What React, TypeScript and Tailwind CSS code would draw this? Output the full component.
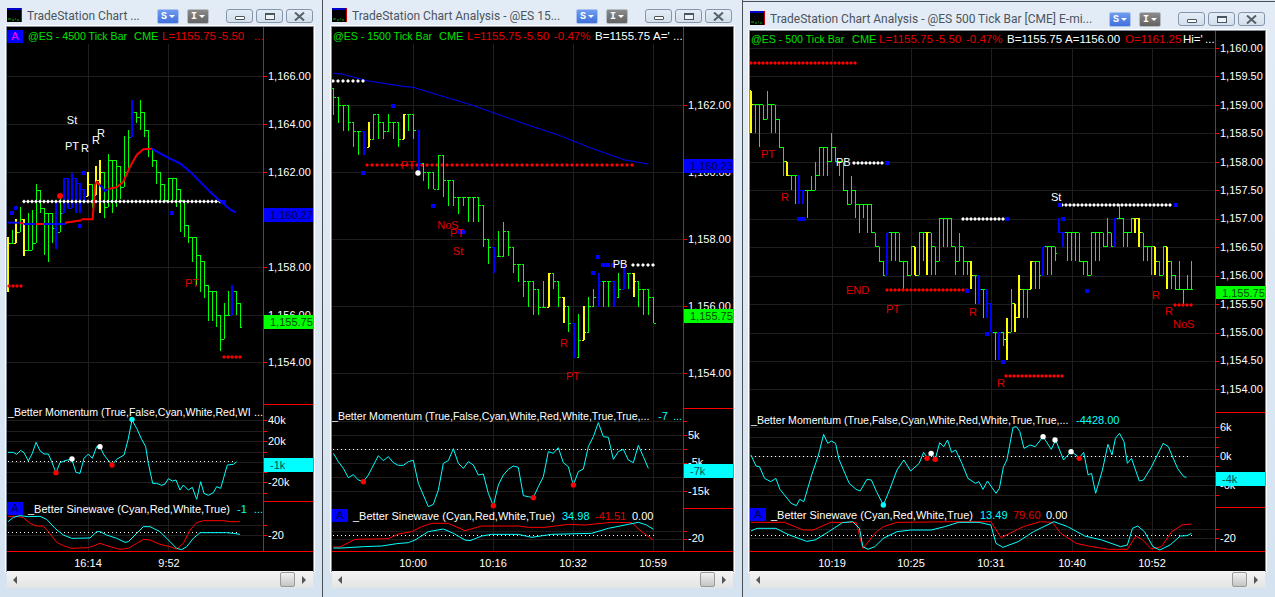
import { ReactNode } from "react";

type Bar = [number, number, string];
type Pt = [number, number];

const barColors: Record<string, string> = { g: "#00ff00", y: "#ffff00", b: "#0000ff" };
const FONT = "'Liberation Sans', Arial, sans-serif";
const RED = "#ff0000";
const DARK_RED = "#e00000";
const CYAN = "#00ffff";
const GREEN = "#00e000";
const GRID = "#1e1e1e";

// staircase ticks: the close sits on whatever the next bar touches
const closeOf = (bars: Bar[], i: number) => {
  const [top, bottom] = bars[i];
  const next = bars[i + 1];
  if (!next) return bottom;
  if (next[0] >= top && next[0] <= bottom) return next[0];
  if (next[1] >= top && next[1] <= bottom) return next[1];
  return (top + bottom) / 2;
};

const bars1: Bar[] = [
  [237, 292, "y"], [230, 243, "g"], [219, 243, "y"], [207, 232, "g"], [219, 256, "y"], [213, 250, "g"], [210, 250, "g"],
  [184, 243, "g"], [190, 213, "g"], [208, 255, "g"], [213, 262, "g"], [213, 243, "g"], [203, 249, "b"], [197, 232, "g"],
  [178, 213, "b"], [178, 208, "b"], [173, 208, "b"], [178, 213, "b"], [183, 213, "b"], [189, 203, "b"], [172, 196, "y"],
  [184, 208, "g"], [166, 195, "y"], [160, 213, "y"], [172, 218, "g"], [154, 207, "g"], [160, 213, "g"], [160, 207, "g"],
  [166, 199, "g"], [136, 187, "g"], [130, 172, "g"], [100, 137, "b"], [112, 123, "g"], [100, 130, "g"], [112, 137, "g"],
  [130, 157, "g"], [148, 167, "g"], [160, 184, "g"], [172, 200, "g"], [184, 200, "g"], [178, 200, "g"], [178, 200, "g"],
  [178, 207, "g"], [189, 232, "g"], [200, 237, "g"], [225, 243, "g"], [237, 262, "g"], [237, 285, "g"], [255, 292, "g"],
  [261, 298, "g"], [285, 321, "g"], [291, 321, "g"], [291, 327, "g"], [315, 351, "g"], [303, 339, "g"], [291, 315, "g"],
  [285, 315, "b"], [291, 315, "g"], [303, 327, "g"],
];

const bars2: Bar[] = [
  [88, 115, "g"], [97, 123, "g"], [105, 131, "g"], [105, 131, "g"], [122, 147, "g"], [131, 155, "g"], [131, 155, "b"],
  [122, 147, "y"], [114, 139, "g"], [114, 139, "g"], [122, 139, "g"], [114, 131, "g"], [122, 139, "g"], [122, 147, "g"],
  [114, 139, "y"], [114, 131, "g"], [114, 139, "g"], [130, 173, "b"], [163, 181, "g"], [172, 189, "g"], [172, 189, "g"],
  [155, 189, "g"], [155, 197, "g"], [180, 206, "g"], [180, 206, "g"], [197, 214, "g"], [197, 206, "g"], [197, 222, "g"],
  [197, 222, "g"], [197, 222, "g"], [205, 247, "g"], [239, 264, "g"], [247, 273, "b"], [231, 256, "g"], [222, 256, "g"],
  [231, 256, "g"], [247, 273, "g"], [264, 282, "g"], [264, 297, "g"], [281, 307, "g"], [281, 315, "g"], [289, 315, "g"],
  [281, 307, "g"], [273, 307, "y"], [273, 289, "g"], [281, 307, "g"], [297, 323, "y"], [306, 332, "g"], [323, 357, "b"],
  [314, 357, "g"], [306, 340, "y"], [297, 332, "g"], [289, 306, "g"], [273, 307, "b"], [281, 307, "g"], [281, 307, "g"],
  [281, 307, "b"], [273, 297, "g"], [265, 289, "b"], [273, 289, "g"], [273, 297, "y"], [281, 307, "g"], [289, 315, "g"],
  [289, 315, "g"], [297, 323, "g"],
];

// window 3 is drawn in quarter-point steps below 1,160.00
const stepY = (n: number) => 48 + 14.2 * n;
const steps3: Bar[] = [
  [3, 6, "y"], [4, 6, "g"], [4, 7, "g"], [4, 5, "g"], [3, 5, "g"], [4, 6, "g"], [4, 6, "g"], [5, 7, "g"], [7, 9, "g"],
  [8, 9, "y"], [9, 10, "g"], [9, 11, "g"], [9, 11, "b"], [10, 11, "b"], [10, 12, "g"], [9, 10, "g"], [8, 10, "g"],
  [7, 9, "g"], [7, 9, "g"], [7, 9, "g"], [6, 8, "g"], [7, 8, "g"], [8, 9, "g"], [8, 10, "g"], [10, 11, "g"], [9, 11, "g"],
  [10, 12, "g"], [11, 13, "g"], [11, 12, "g"], [11, 13, "g"], [11, 13, "g"], [13, 14, "g"], [14, 15, "g"], [15, 16, "g"],
  [13, 16, "b"], [13, 15, "g"], [13, 15, "g"], [13, 15, "g"], [15, 17, "g"], [15, 16, "g"], [14, 16, "g"], [14, 16, "y"],
  [13, 16, "g"], [13, 15, "g"], [13, 16, "y"], [13, 16, "g"], [14, 16, "g"], [12, 15, "g"], [12, 14, "g"], [12, 14, "g"],
  [12, 14, "g"], [14, 16, "g"], [13, 15, "g"], [14, 16, "g"], [15, 16, "g"], [15, 17, "y"], [16, 18, "g"], [16, 18, "b"],
  [17, 19, "g"], [17, 19, "b"], [18, 20, "b"], [20, 22, "g"], [20, 22, "b"], [20, 21, "g"], [19, 22, "y"], [17, 20, "g"],
  [18, 20, "y"], [16, 19, "y"], [17, 19, "g"], [17, 19, "g"], [15, 17, "y"], [15, 17, "g"], [15, 17, "g"], [14, 16, "b"],
  [14, 16, "g"], [14, 16, "g"], [14, 15, "g"], [12, 13, "b"], [13, 14, "b"], [13, 15, "g"], [13, 15, "g"], [13, 15, "g"],
  [13, 15, "g"], [15, 16, "g"], [15, 16, "g"], [13, 16, "g"], [13, 15, "g"], [13, 15, "g"], [13, 14, "g"], [12, 14, "g"],
  [13, 14, "g"], [12, 14, "b"], [11, 12, "g"], [12, 14, "g"], [13, 14, "g"], [12, 13, "g"], [12, 13, "y"], [12, 14, "y"],
  [13, 15, "g"], [14, 15, "g"], [14, 16, "g"], [14, 16, "y"], [15, 16, "g"], [14, 16, "g"], [14, 17, "y"], [15, 17, "g"],
  [16, 17, "g"], [15, 17, "g"], [17, 18, "g"], [16, 17, "g"], [15, 17, "g"],
];
const bars3: Bar[] = steps3.map(([a, b, c]) => [stepY(a), stepY(b), c]);

// traced lines, in crop units (x / 3 or / 2.93, y / 3)
const z1 = (p: Pt[], oy = 400): Pt[] => p.map(([x, y]) => [x / 3, oy + y / 3]);
const z2 = (p: Pt[], oy = 400): Pt[] => p.map(([x, y]) => [325 + x / 3, oy + y / 3]);
const z3 = (p: Pt[], oy = 400): Pt[] => p.map(([x, y]) => [740 + x / 2.93, oy + y / 3]);

const mom1 = z1([[24,157],[40,157],[50,163],[62,151],[72,158],[85,183],[97,160],[108,127],[120,152],[132,162],[145,162],[155,185],[168,218],[180,188],[195,182],[215,177],[228,217],[240,220],[252,175],[265,162],[277,175],[290,140],[300,140],[312,165],[336,195],[350,178],[372,165],[384,120],[396,60],[410,85],[425,118],[437,140],[445,190],[458,250],[470,250],[485,256],[495,252],[505,236],[517,243],[528,240],[540,270],[550,255],[565,270],[577,262],[590,298],[602,245],[612,280],[625,286],[640,278],[650,260],[662,265],[682,195],[700,193],[710,185]]);
const sineC1 = z1([[24,365],[40,352],[60,347],[85,350],[120,349],[140,358],[165,385],[190,405],[215,415],[270,414],[290,395],[300,395],[320,405],[350,415],[375,427],[385,425],[410,400],[430,380],[450,380],[480,395],[510,425],[530,445],[545,449],[560,440],[580,415],[600,398],[680,398],[700,400],[720,403]]);
const sineR1 = z1([[24,349],[50,349],[70,353],[90,370],[110,378],[130,378],[145,395],[170,427],[190,437],[215,445],[265,443],[280,438],[300,430],[330,440],[360,448],[385,445],[410,430],[430,418],[450,420],[480,433],[510,440],[530,447],[550,430],[570,390],[590,368],[610,362],[670,362],[690,365],[720,365]]);

const mom2 = z2([[25,160],[40,185],[55,205],[70,233],[85,224],[100,240],[115,245],[130,225],[160,167],[175,182],[190,170],[205,188],[220,196],[235,196],[250,185],[265,181],[280,250],[295,285],[310,320],[325,313],[340,270],[355,190],[370,182],[385,146],[400,190],[415,205],[430,185],[445,195],[460,225],[475,222],[490,280],[505,317],[520,255],[535,225],[550,208],[565,198],[580,202],[595,287],[610,290],[625,293],[640,260],[655,230],[670,155],[685,160],[700,143],[715,188],[730,200],[745,255],[760,215],[775,207],[790,140],[805,110],[820,68],[835,110],[850,112],[865,178],[880,155],[895,148],[910,180],[925,188],[940,136],[955,170],[970,205]]);
const sineC2 = z2([[25,444],[50,444],[115,440],[170,438],[215,431],[250,428],[270,420],[310,395],[355,387],[385,400],[420,420],[435,422],[470,408],[500,403],[580,403],[620,412],[680,403],[800,400],[850,385],[910,373],[940,367],[965,375],[985,388]]);
const sineR2 = z2([[25,441],[45,441],[90,418],[190,416],[220,402],[260,395],[290,380],[320,370],[370,370],[420,392],[470,378],[580,378],[610,382],[660,382],[730,373],[780,375],[860,367],[920,368],[950,395],[985,420]]);

const mom3 = z3([[32,165],[47,198],[57,200],[72,235],[90,245],[105,235],[117,268],[150,310],[165,317],[175,298],[187,305],[210,225],[230,165],[245,103],[257,130],[268,123],[280,130],[290,178],[320,250],[340,268],[352,273],[372,238],[385,240],[400,275],[420,315],[440,265],[460,210],[480,180],[500,213],[525,190],[538,157],[548,172],[562,160],[572,178],[585,128],[597,140],[608,120],[620,157],[632,150],[650,190],[668,235],[690,250],[700,245],[712,268],[725,243],[750,280],[760,265],[772,200],[782,180],[800,82],[810,80],[820,95],[832,145],[850,135],[865,140],[888,110],[912,148],[925,120],[948,180],[970,155],[985,165],[993,175],[1007,157],[1020,225],[1030,220],[1042,280],[1062,210],[1078,133],[1090,165],[1100,115],[1112,100],[1125,125],[1135,190],[1147,175],[1170,243],[1182,240],[1205,202],[1240,130],[1255,140],[1282,205],[1300,230],[1308,232]]);
const sineC3 = z3([[32,393],[50,385],[105,385],[140,403],[195,424],[220,420],[260,395],[300,368],[330,365],[350,385],[360,440],[375,448],[395,440],[420,415],[460,395],[500,390],[560,390],[600,380],[640,367],[700,367],[735,375],[750,430],[770,442],[815,425],[860,395],[920,365],[960,380],[1010,408],[1060,420],[1115,440],[1135,435],[1150,385],[1165,378],[1185,395],[1210,440],[1230,450],[1260,435],[1290,408],[1310,407],[1323,400]]);
const sineR3 = z3([[32,367],[130,367],[185,390],[215,390],[265,367],[340,367],[360,445],[400,395],[420,380],[460,367],[640,365],[735,365],[765,413],[830,380],[880,365],[915,367],[940,400],[985,430],[1020,438],[1080,448],[1135,448],[1160,408],[1180,420],[1205,447],[1235,440],[1265,395],[1295,375],[1323,372]]);

const ma2 = z2([[25,220],[50,222],[130,243],[240,260],[265,262],[340,285],[440,315],[510,340],[600,372],[700,405],[800,445],[900,480],[970,492]], 0);

const pts = (p: Pt[]) => p.map(([x, y]) => `${x},${y}`).join(" ");

const Line = ({ p, color, w = 1 }: { p: Pt[]; color: string; w?: number }) => (
  <polyline points={pts(p)} fill="none" stroke={color} strokeWidth={w} strokeLinejoin="round" />
);

const Bars = ({ bars, x0, step }: { bars: Bar[]; x0: number; step: number }) => (
  <g shapeRendering="crispEdges">
    {bars.map(([top, bottom, c], i) => {
      const x = x0 + i * step;
      const color = barColors[c];
      const open = i > 0 ? Math.min(bottom, Math.max(top, closeOf(bars, i - 1))) : top;
      const close = closeOf(bars, i);
      return (
        <g key={i} stroke={color}>
          <line x1={x} x2={x} y1={top} y2={bottom} strokeWidth={c === "g" ? 1 : 2} />
          <line x1={x - 2} x2={x} y1={open} y2={open} />
          <line x1={x} x2={x + 2} y1={close} y2={close} />
        </g>
      );
    })}
  </g>
);

const Dots = ({ from, to, step, y, color }: { from: number; to: number; step: number; y: number; color: string }) => {
  const items = [];
  for (let x = from; x <= to; x += step) items.push(x);
  return (
    <g fill={color}>
      {items.map((x) => (
        <path key={x} d={`M${x - 2} ${y}L${x} ${y - 2}L${x + 2} ${y}L${x} ${y + 2}Z`} />
      ))}
    </g>
  );
};

const Squares = ({ at }: { at: Pt[] }) => (
  <g fill="#0000ff" shapeRendering="crispEdges">
    {at.map(([x, y], i) => (
      <rect key={i} x={x - 2} y={y - 2} width={4} height={4} />
    ))}
  </g>
);

const Marks = ({ at, color }: { at: Pt[]; color: string }) => (
  <g fill={color}>
    {at.map(([x, y], i) => (
      <circle key={i} cx={x} cy={y} r={2.7} />
    ))}
  </g>
);

const T = ({ x, y, color = "#fff", anchor, size = 11, children }: { x: number; y: number; color?: string; anchor?: "middle"; size?: number; children: ReactNode }) => (
  <text x={x} y={y + 4} fill={color} textAnchor={anchor} fontSize={size} fontFamily={FONT}>
    {children}
  </text>
);

// prices in the quote line run a little wider than the other labels
const Q = ({ x, y, color, children }: { x: number; y: number; color?: string; children: ReactNode }) => (
  <T x={x} y={y} color={color} size={11.5}>{children}</T>
);

const Grid = ({ left, axis, top, bottom, xs, ys }: { left: number; axis: number; top: number; bottom: number; xs: number[]; ys: number[] }) => (
  <g stroke={GRID} shapeRendering="crispEdges">
    {xs.map((x) => (
      <line key={x} x1={x} x2={x} y1={top} y2={bottom} />
    ))}
    {ys.map((y) => (
      <line key={y} x1={left} x2={axis} y1={y} y2={y} />
    ))}
  </g>
);

const Ticks = ({ axis, ys }: { axis: number; ys: number[] }) => (
  <g stroke={RED} shapeRendering="crispEdges">
    {ys.map((y) => (
      <line key={y} x1={axis} x2={axis + 4} y1={y + 0.5} y2={y + 0.5} />
    ))}
  </g>
);

const Tag = ({ x, w, y, h, bg, text, color }: { x: number; w: number; y: number; h: number; bg: string; text: string; color: string }) => (
  <g>
    <rect x={x} y={y} width={w} height={h} fill={bg} shapeRendering="crispEdges" />
    <T x={x + 6} y={y + h / 2} color={color}>{text}</T>
  </g>
);

const Dotted = ({ x1, x2, y }: { x1: number; x2: number; y: number }) => (
  <line x1={x1} x2={x2} y1={y + 0.5} y2={y + 0.5} stroke="#fff" strokeDasharray="1 3" shapeRendering="crispEdges" />
);

const BoxA = ({ x, y, color }: { x: number; y: number; color: string }) => (
  <g>
    <rect x={x} y={y} width={16} height={13} fill="#0000ff" shapeRendering="crispEdges" />
    <T x={x + 8} y={y + 6} color={color} anchor="middle">A</T>
  </g>
);

const Chart1 = () => (
  <svg viewBox="7 27 306 544" className="block w-full h-full">
    <Grid left={7} axis={263} top={44} bottom={551} xs={[88, 168]} ys={[76, 124, 172, 267, 315, 362, 420, 431, 441, 452, 462, 472, 482, 493, 525, 535]} />
    <Bars bars={bars1} x0={8} step={4} />
    <Dots from={24} to={222} step={4} y={201.5} color="#fff" />
    <Dots from={9} to={21} step={4} y={286} color={RED} />
    <Dots from={224} to={240} step={4} y={357} color={RED} />
    <Line w={2} color="#0000ff" p={z1([[24,8],[60,8]], 220)} />
    <Line w={2} color={RED} p={z1([[60,8],[72,11]], 220)} />
    <Line w={2} color="#0000ff" p={z1([[72,12],[108,12]], 220)} />
    <Line w={2} color={RED} p={z1([[108,12],[132,12]], 220)} />
    <Line w={2} color="#0000ff" p={z1([[132,12],[195,12]], 220)} />
    <Line w={2} color={RED} p={z1([[195,8],[245,1]], 220)} />
    <Line w={2} color={RED} p={z1([[245,658],[278,658],[285,555],[290,545],[300,555]], 0)} />
    <Line w={2} color="#0000ff" p={z1([[300,555],[315,573],[325,567]], 0)} />
    <Line w={2} color={RED} p={z1([[325,567],[350,562],[370,545],[390,500],[410,465],[430,448],[455,446]], 0)} />
    <Line w={2} color="#0000ff" p={z1([[455,446],[480,460],[510,476],[540,490],[570,515],[600,545],[630,575],[660,603],[690,628],[708,638]], 0)} />
    <Squares at={[[12,213],[16,208],[84,173],[172,213],[224,202],[80,226]]} />
    <circle cx={60} cy={196} r={3} fill={RED} />
    <T x={72} y={120} anchor="middle">St</T>
    <T x={72} y={146} anchor="middle">PT</T>
    <T x={85} y={148} anchor="middle">R</T>
    <T x={96} y={140} anchor="middle">R</T>
    <T x={101} y={133} anchor="middle">R</T>
    <T x={192} y={283} color={DARK_RED} anchor="middle">PT</T>

    {/* axis */}
    <line x1={263.5} x2={263.5} y1={27} y2={551} stroke={RED} shapeRendering="crispEdges" />
    <Ticks axis={263} ys={[76, 124, 172, 267, 315, 362, 420, 431, 441, 452, 462, 472, 482, 493, 525, 535]} />
    <T x={268} y={76}>1,166.00</T>
    <T x={268} y={124}>1,164.00</T>
    <T x={268} y={172}>1,162.00</T>
    <T x={268} y={267}>1,158.00</T>
    <T x={268} y={315}>1,156.00</T>
    <T x={268} y={362}>1,154.00</T>
    <Tag x={264} w={49} y={208} h={14} bg="#0000ff" text="1,160.27" color="#00004d" />
    <Tag x={264} w={49} y={315} h={14} bg="#00ff00" text="1,155.75" color="#004d00" />

    {/* header */}
    <BoxA x={7} y={30} color="#ff00ff" />
    <T x={28} y={36} size={10.6} color={GREEN}>@ES - 4500 Tick Bar</T>
    <T x={134} y={36} color={GREEN}>CME</T>
    <Q x={162} y={36} color={DARK_RED}>L=1155.75</Q>
    <Q x={218} y={36} color={DARK_RED}>-5.50</Q>
    <Q x={254} y={36} color={DARK_RED}>...</Q>

    {/* momentum */}
    <line x1={263} x2={313} y1={404.5} y2={404.5} stroke={RED} shapeRendering="crispEdges" />
    <Dotted x1={8} x2={236} y={461} />
    <Line color={CYAN} p={mom1} />
    <Marks color={RED} at={z1([[168,218],[336,195]])} />
    <Marks color="#fff" at={z1([[216,177],[300,140]])} />
    <Marks color={CYAN} at={z1([[396,58]])} />
    <T x={8} y={412} size={10.6}>_Better Momentum (True,False,Cyan,White,Red,WI</T>
    <T x={254} y={412} color="#fff">...</T>
    <T x={268} y={420}>40k</T>
    <T x={268} y={441}>20k</T>
    <T x={268} y={482}>-20k</T>
    <Tag x={264} w={49} y={458} h={14} bg={CYAN} text="-1k" color="#004d4d" />

    {/* sinewave */}
    <line x1={263} x2={313} y1={501.5} y2={501.5} stroke={RED} shapeRendering="crispEdges" />
    <Dotted x1={8} x2={240} y={532} />
    <Line color={RED} p={sineR1} />
    <Line color={CYAN} p={sineC1} />
    <BoxA x={7} y={502} color="#00004d" />
    <T x={28} y={509}>_Better Sinewave (Cyan,Red,White,True)</T>
    <T x={237} y={509} color={CYAN}>-1</T>
    <T x={254} y={509} color={CYAN}>...</T>
    <T x={268} y={535}>-20</T>

    {/* time */}
    <line x1={7} x2={313} y1={551.5} y2={551.5} stroke={RED} shapeRendering="crispEdges" />
    <T x={88} y={563} anchor="middle">16:14</T>
    <T x={169} y={563} anchor="middle">9:52</T>
  </svg>
);

const Chart2 = () => (
  <svg viewBox="332 27 401 544" className="block w-full h-full">
    <Grid left={332} axis={683} top={44} bottom={551} xs={[413, 493, 573, 653]} ys={[105, 172, 239, 306, 373, 421, 435, 449, 463, 477, 491, 531, 539]} />
    <Line color="#0000ff" p={ma2} />
    <Dots from={333} to={365} step={5} y={81} color="#fff" />
    <Dots from={367} to={635} step={5} y={165} color={RED} />
    <T x={408} y={165} color={DARK_RED} anchor="middle">PT</T>
    <Bars bars={bars2} x0={333.5} step={5} />
    <circle cx={418} cy={173} r={2.7} fill="#fff" />
    <Squares at={[[393,106],[363,173],[433,206],[460,232],[464,232],[598,257],[603,265],[608,265],[613,265],[593,273]]} />
    <Dots from={633} to={653} step={5} y={265} color="#fff" />
    <T x={620} y={264} anchor="middle">PB</T>
    <T x={448} y={225} color={DARK_RED} anchor="middle">NoS</T>
    <T x={457} y={233} color={DARK_RED} anchor="middle">PT</T>
    <T x={458} y={251} color={DARK_RED} anchor="middle">St</T>
    <T x={564} y={343} color={DARK_RED} anchor="middle">R</T>
    <T x={573} y={376} color={DARK_RED} anchor="middle">PT</T>

    <line x1={683.5} x2={683.5} y1={27} y2={551} stroke={RED} shapeRendering="crispEdges" />
    <Ticks axis={683} ys={[105, 172, 239, 306, 373, 421, 435, 449, 463, 477, 491, 531, 539]} />
    <T x={688} y={105}>1,162.00</T>
    <T x={688} y={172}>1,160.00</T>
    <T x={688} y={239}>1,158.00</T>
    <T x={688} y={306}>1,156.00</T>
    <T x={688} y={373}>1,154.00</T>
    <Tag x={684} w={49} y={159} h={14} bg="#0000ff" text="1,160.23" color="#00004d" />
    <Tag x={684} w={49} y={309} h={14} bg="#00ff00" text="1,155.75" color="#004d00" />

    <T x={333} y={36} size={10.6} color={GREEN}>@ES - 1500 Tick Bar</T>
    <T x={439} y={36} color={GREEN}>CME</T>
    <Q x={467} y={36} color={DARK_RED}>L=1155.75</Q>
    <Q x={523} y={36} color={DARK_RED}>-5.50</Q>
    <Q x={554} y={36} color={DARK_RED}>-0.47%</Q>
    <Q x={595} y={36}>B=1155.75</Q>
    <Q x={653} y={36}>A='</Q>
    <Q x={673} y={36}>...</Q>

    <line x1={683} x2={733} y1={408.5} y2={408.5} stroke={RED} shapeRendering="crispEdges" />
    <Dotted x1={333} x2={650} y={449} />
    <Line color={CYAN} p={mom2} />
    <Marks color={RED} at={z2([[115,245],[505,317],[625,293],[745,255]])} />
    <T x={332} y={416} size={10.6}>_Better Momentum (True,False,Cyan,White,Red,White,True,True,...</T>
    <T x={658} y={416} color={CYAN}>-7</T>
    <T x={673} y={416} color={CYAN}>...</T>
    <T x={688} y={435}>5k</T>
    <T x={688} y={462}>-5k</T>
    <T x={688} y={491}>-15k</T>
    <Tag x={684} w={49} y={464} h={14} bg={CYAN} text="-7k" color="#004d4d" />

    <line x1={683} x2={733} y1={508.5} y2={508.5} stroke={RED} shapeRendering="crispEdges" />
    <Dotted x1={333} x2={654} y={535} />
    <Line color={RED} p={sineR2} />
    <Line color={CYAN} p={sineC2} />
    <BoxA x={332} y={509} color="#00004d" />
    <T x={353} y={516}>_Better Sinewave (Cyan,Red,White,True)</T>
    <T x={562} y={516} color={CYAN}>34.98</T>
    <T x={595} y={516} color={DARK_RED}>-41.51</T>
    <T x={632} y={516}>0.00</T>
    <T x={688} y={538}>-20</T>

    <line x1={332} x2={733} y1={551.5} y2={551.5} stroke={RED} shapeRendering="crispEdges" />
    <T x={413} y={563} anchor="middle">10:00</T>
    <T x={493} y={563} anchor="middle">10:16</T>
    <T x={573} y={563} anchor="middle">10:32</T>
    <T x={653} y={563} anchor="middle">10:59</T>
  </svg>
);

const Chart3 = () => (
  <svg viewBox="750 31 515 540" className="block w-full h-full">
    <Grid left={750} axis={1215} top={48} bottom={551} xs={[832, 911, 991, 1072, 1152]} ys={[48, 76, 105, 133, 162, 190, 219, 247, 276, 304, 333, 361, 389, 427, 437, 447, 456, 466, 476, 485, 495, 529, 538]} />
    <Dots from={751} to={856} step={4} y={63} color={RED} />
    <Bars bars={bars3} x0={751} step={4} />
    <T x={761} y={154} color={DARK_RED}>PT</T>
    <T x={836} y={162}>PB</T>
    <Dots from={854} to={884} step={4} y={163} color="#fff" />
    <T x={1051} y={197}>St</T>
    <Dots from={1062} to={1172} step={4} y={205} color="#fff" />
    <Dots from={963} to={1004} step={4} y={219} color="#fff" />
    <Dots from={887} to={968} step={4} y={290} color={RED} />
    <Dots from={1006} to={1064} step={4} y={376} color={RED} />
    <Dots from={1175} to={1192} step={4} y={305} color={RED} />
    <Squares at={[[887,163],[1060,205],[1176,205],[799,219],[803,219],[1007,219],[1063,219],[967,291],[987,334],[1003,362],[1087,291]]} />
    <T x={781} y={197} color={DARK_RED}>R</T>
    <T x={846} y={290} color={DARK_RED}>END</T>
    <T x={886} y={309} color={DARK_RED}>PT</T>
    <T x={969} y={312} color={DARK_RED}>R</T>
    <T x={997} y={383} color={DARK_RED}>R</T>
    <T x={1152} y={295} color={DARK_RED}>R</T>
    <T x={1165} y={311} color={DARK_RED}>R</T>
    <T x={1173} y={324} color={DARK_RED}>NoS</T>

    <line x1={1215.5} x2={1215.5} y1={31} y2={551} stroke={RED} shapeRendering="crispEdges" />
    <Ticks axis={1215} ys={[48, 76, 105, 133, 162, 190, 219, 247, 276, 304, 333, 361, 389, 427, 437, 447, 456, 466, 476, 485, 495, 529, 538]} />
    {["1,160.00","1,159.50","1,159.00","1,158.50","1,158.00","1,157.50","1,157.00","1,156.50","1,156.00","1,155.50","1,155.00","1,154.50","1,154.00"].map((label, i) => (
      <T key={label} x={1220} y={48 + i * 28.4}>{label}</T>
    ))}
    <Tag x={1216} w={49} y={286} h={13} bg="#00ff00" text="1,155.75" color="#004d00" />

    <T x={751} y={39} size={10.6} color={GREEN}>@ES - 500 Tick Bar</T>
    <T x={852} y={39} color={GREEN}>CME</T>
    <Q x={879} y={39} color={DARK_RED}>L=1155.75</Q>
    <Q x={935} y={39} color={DARK_RED}>-5.50</Q>
    <Q x={966} y={39} color={DARK_RED}>-0.47%</Q>
    <Q x={1007} y={39}>B=1155.75</Q>
    <Q x={1065} y={39}>A=1156.00</Q>
    <Q x={1125} y={39} color={DARK_RED}>O=1161.25</Q>
    <Q x={1183} y={39}>Hi='</Q>
    <Q x={1205} y={39}>...</Q>

    <line x1={1215} x2={1265} y1={412.5} y2={412.5} stroke={RED} shapeRendering="crispEdges" />
    <Dotted x1={751} x2={1188} y={456} />
    <Line color={CYAN} p={mom3} />
    <Marks color={RED} at={z3([[548,175],[572,178],[994,175]])} />
    <Marks color="#fff" at={z3([[560,160],[888,110],[923,120],[970,155]])} />
    <Marks color={CYAN} at={z3([[420,315]])} />
    <T x={751} y={420} size={10.6}>_Better Momentum (True,False,Cyan,White,Red,White,True,True,...</T>
    <T x={1076} y={420} color={CYAN}>-4428.00</T>
    <T x={1220} y={427}>6k</T>
    <T x={1220} y={456}>0k</T>
    <T x={1220} y={485}>-6k</T>
    <Tag x={1216} w={49} y={472} h={14} bg={CYAN} text="-4k" color="#004d4d" />

    <line x1={1215} x2={1265} y1={507.5} y2={507.5} stroke={RED} shapeRendering="crispEdges" />
    <Dotted x1={751} x2={1192} y={535} />
    <Line color={RED} p={sineR3} />
    <Line color={CYAN} p={sineC3} />
    <BoxA x={750} y={508} color="#00004d" />
    <T x={771} y={515}>_Better Sinewave (Cyan,Red,White,True)</T>
    <T x={980} y={515} color={CYAN}>13.49</T>
    <T x={1013} y={515} color={DARK_RED}>79.60</T>
    <T x={1046} y={515}>0.00</T>
    <T x={1220} y={538}>-20</T>

    <line x1={750} x2={1265} y1={551.5} y2={551.5} stroke={RED} shapeRendering="crispEdges" />
    <T x={832} y={563} anchor="middle">10:19</T>
    <T x={911} y={563} anchor="middle">10:25</T>
    <T x={991} y={563} anchor="middle">10:31</T>
    <T x={1072} y={563} anchor="middle">10:40</T>
    <T x={1152} y={563} anchor="middle">10:52</T>
  </svg>
);

const AppIcon = () => (
  <svg width={15} height={14} viewBox="0 0 15 14" className="shrink-0">
    <rect width={15} height={14} fill="#000" />
    <rect width={15} height={2} fill="#0000c8" />
    <rect x={14} width={1} height={14} fill="#c00000" />
    <path d="M1 11h3M5 12h2M8 11h1M10 12h2" stroke="#00c000" />
  </svg>
);

const WinBtn = ({ children }: { children: ReactNode }) => (
  <div className="w-[27px] h-[14px] flex items-center justify-center rounded-[3px] border border-[#8595aa] bg-gradient-to-b from-[#e4edf6] to-[#d3dfeb]">
    {children}
  </div>
);

const ActionBtn = ({ label, tone }: { label: string; tone: "blue" | "gray" }) => (
  <div
    className={
      tone === "blue"
        ? "w-[22px] h-[15px] flex items-center justify-center gap-[2px] rounded-[2px] bg-gradient-to-b from-[#6f9bf0] to-[#3f6fdc] border border-[#a9c3ee]"
        : "w-[22px] h-[15px] flex items-center justify-center gap-[2px] rounded-[2px] bg-gradient-to-b from-[#8a8a8a] to-[#636363] border border-[#b5bcc4]"
    }
  >
    <span className="text-[10px] leading-none font-bold text-white font-['Liberation_Mono',monospace]">{label}</span>
    <span className="w-0 h-0 border-x-[3px] border-x-transparent border-t-[3px] border-t-white" />
  </div>
);

const TitleBar = ({ title, className }: { title: string; className: string }) => (
  <div className={className}>
    <AppIcon />
    <div className="ml-[5px] mt-[1px] flex-1 min-w-0 text-[12px] leading-[15px] text-[#4b545c] font-['Roboto',sans-serif] whitespace-nowrap overflow-hidden">
      {title}
    </div>
    <div className="mt-[1px] flex items-start">
      <ActionBtn label="S" tone="blue" />
      <div className="ml-[8px]">
        <ActionBtn label="I" tone="gray" />
      </div>
      <div className="ml-[17px] flex gap-[3px]">
        <WinBtn>
          <span className="block mt-[3px] w-[10px] h-[4px] border border-[#4a5560] bg-white rounded-[1px]" />
        </WinBtn>
        <WinBtn>
          <span className="block w-[10px] h-[7px] border border-t-2 border-[#4a5560] bg-[#eef3f9]" />
        </WinBtn>
        <WinBtn>
          <svg width={11} height={9} viewBox="0 0 11 9">
            <path d="M1 0.5L10 8.5M10 0.5L1 8.5" stroke="#56616c" strokeWidth={2} />
          </svg>
        </WinBtn>
      </div>
    </div>
  </div>
);

const ScrollBar = () => (
  <div className="h-[17px] flex items-center bg-gradient-to-b from-[#f4f4f4] to-[#e4e4e4]">
    <span className="ml-[6px] w-0 h-0 border-y-[4px] border-y-transparent border-r-[4px] border-r-[#555]" />
    <div className="flex-1" />
    <div className="w-[15px] h-[15px] rounded-[2px] border border-[#9a9a9a] bg-gradient-to-b from-[#f2f2f2] to-[#c4c4c4]" />
    <span className="ml-[7px] mr-[7px] w-0 h-0 border-y-[4px] border-y-transparent border-l-[4px] border-l-[#555]" />
  </div>
);

const Body = ({ children, className }: { children: ReactNode; className: string }) => (
  <div className={className}>
    <div className="h-full bg-black">{children}</div>
    <ScrollBar />
  </div>
);

export default function App() {
  return (
    <div className="relative w-[1275px] h-[597px] overflow-hidden bg-[#d8e5f2] select-none">
      <div className="absolute left-0 top-0 w-[323px] h-[597px] border-r border-[#4a4f55] bg-gradient-to-b from-[#e3ecf6] to-[#d5e3f1]">
        <TitleBar title="TradeStation Chart ..." className="h-[27px] ml-[7px] mr-[9px] pt-[8px] flex items-start" />
        <Body className="ml-[7px] mr-[9px] w-[306px] h-[544px] shadow-[0_0_0_1px_#7f8b97,0_0_0_2px_#fff]">
          <Chart1 />
        </Body>
      </div>
      <div className="absolute left-[323px] top-0 w-[420px] h-[597px] border-r border-[#4a4f55] bg-gradient-to-b from-[#e3ecf6] to-[#d5e3f1]">
        <TitleBar title="TradeStation Chart Analysis - @ES 15..." className="h-[27px] ml-[9px] mr-[10px] pt-[8px] flex items-start" />
        <Body className="ml-[9px] w-[401px] h-[544px] shadow-[0_0_0_1px_#7f8b97,0_0_0_2px_#fff]">
          <Chart2 />
        </Body>
      </div>
      <div className="absolute left-[743px] top-[1px] w-[532px] h-[596px] border-t border-[#4a4f55] bg-gradient-to-b from-[#e3ecf6] to-[#d5e3f1]">
        <TitleBar title="TradeStation Chart Analysis - @ES 500 Tick Bar [CME] E-mi..." className="h-[29px] ml-[7px] mr-[10px] pt-[9px] flex items-start" />
        <Body className="ml-[7px] w-[515px] h-[540px] shadow-[0_0_0_1px_#7f8b97,0_0_0_2px_#fff]">
          <Chart3 />
        </Body>
      </div>
    </div>
  );
}
